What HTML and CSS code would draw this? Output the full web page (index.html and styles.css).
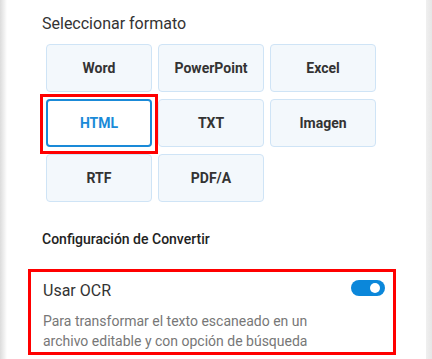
FILE: index.html
```html
<!DOCTYPE html>
<html lang="es">

<head>
   <meta charset="UTF-8">
   <meta name="viewport" content="width=device-width, initial-scale=1.0">
   <title>Convertir</title>
   <link rel="stylesheet" href="styles.css">
</head>

<body>
   <div class="panel">
      <!-- Format picker -->
      <h3 class="section-title">Seleccionar formato</h3>
      <div class="format-grid">
         <button class="format-btn">Word</button>
         <button class="format-btn">PowerPoint</button>
         <button class="format-btn">Excel</button>
         <button class="format-btn selected">HTML</button>
         <button class="format-btn">TXT</button>
         <button class="format-btn">Imagen</button>
         <button class="format-btn">RTF</button>
         <button class="format-btn">PDF/A</button>
      </div>

      <!-- Convert settings -->
      <h3 class="section-title settings-title">Configuración de Convertir</h3>
      <div class="setting-row">
         <div class="setting-head">
            <span class="setting-name">Usar OCR</span>
            <span class="toggle on"><span class="knob"></span></span>
         </div>
         <p class="setting-desc">Para transformar el texto escaneado en un archivo editable y con opción de búsqueda</p>
      </div>
   </div>
</body>

</html>
```

FILE: styles.css
```css
      body {
         margin: 0;
         font-family: Roboto, 'Liberation Sans', sans-serif;
         background: linear-gradient(to right, #dcdcdc 0, #f4f4f4 5px, #fff 7px, #fff 426px, #f0f0f0 426px, #e6e6e6 432px);
         height: 359px;
         overflow: hidden;
      }

      .panel {
         margin: 0 6px 0 7px;
         padding: 14px 0 0 21px;
      }

      .section-title {
         margin: 0;
         padding-left: 14px;
         font-size: 16px;
         line-height: 20px;
         font-weight: 400;
         color: #333;
      }

      .settings-title {
         margin-top: 27px;
         font-size: 14px;
         font-weight: 500;
         color: #222;
      }

      .format-grid {
         display: grid;
         grid-template-columns: repeat(3, 106px);
         grid-auto-rows: 48px;
         column-gap: 6px;
         row-gap: 7px;
         margin: 10px 0 0 18px;
      }

      .format-btn {
         position: relative;
         box-sizing: border-box;
         border: 1px solid #cfe4f6; /* soft blue edge */
         border-radius: 4px;
         background-color: #f3f8fc;
         color: #333;
         font-family: inherit;
         font-size: 14px;
         font-weight: 700;
         cursor: pointer;
      }

      .format-btn.selected {
         border: 2px solid #1a8ad8;
         background-color: #fff;
         color: #1a8ad8;
      }

      /* red highlight frame around the chosen format */
      .format-btn.selected::after {
         content: '';
         position: absolute;
         top: -7px;
         right: -8px;
         bottom: -9px;
         left: -8px;
         border: 3px solid #f00;
      }

      .setting-row {
         width: 368px;
         box-sizing: border-box;
         margin-top: 20px;
         border: 3px solid #f00;
         padding: 9px 8px 1px 12px;
      }

      .setting-head {
         display: flex;
         justify-content: space-between;
         align-items: flex-start;
      }

      .setting-name {
         font-size: 16px;
         line-height: 20px;
         color: #333;
      }

      .toggle {
         position: relative;
         width: 34px;
         height: 16px;
         margin-top: -1px;
         border-radius: 8px;
         background-color: #0b87da;
      }

      .toggle .knob {
         position: absolute;
         top: 3px;
         right: 5px;
         width: 10px;
         height: 10px;
         border-radius: 50%;
         background-color: #fff;
      }

      .setting-desc {
         margin: 10px 0 0;
         max-width: 300px;
         font-size: 14px;
         line-height: 20px;
         color: #777;
      }
```
